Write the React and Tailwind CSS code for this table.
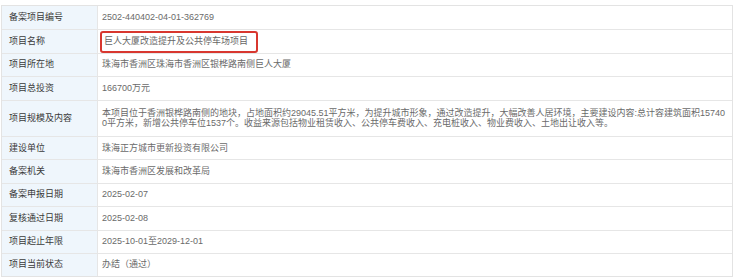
import React from 'react';

const rows = [
  { label: '备案项目编号', value: '2502-440402-04-01-362769' },
  { label: '项目名称', value: '巨人大厦改造提升及公共停车场项目', marked: true },
  { label: '项目所在地', value: '珠海市香洲区珠海市香洲区银桦路南侧巨人大厦' },
  { label: '项目总投资', value: '166700万元' },
  {
    label: '项目规模及内容',
    value:
      '本项目位于香洲银桦路南侧的地块，占地面积约29045.51平方米，为提升城市形象，通过改造提升，大幅改善人居环境，主要建设内容:总计容建筑面积157400平方米，新增公共停车位1537个。收益来源包括物业租赁收入、公共停车费收入、充电桩收入、物业费收入、土地出让收入等。',
    tall: true,
  },
  { label: '建设单位', value: '珠海正方城市更新投资有限公司' },
  { label: '备案机关', value: '珠海市香洲区发展和改革局' },
  { label: '备案申报日期', value: '2025-02-07' },
  { label: '复核通过日期', value: '2025-02-08' },
  { label: '项目起止年限', value: '2025-10-01至2029-12-01' },
  { label: '项目当前状态', value: '办结（通过）' },
];

const App = () => {
  return (
    <div
      className="w-[740px] h-[280px] bg-white pt-[5px] pl-px overflow-hidden"
      style={{ fontFamily: '"Liberation Sans", "Noto Sans CJK SC", sans-serif' }}
    >
      <div className="w-[732px] border border-[#e3e3e3] text-[9px]">
        {rows.map((row, i) => (
          <div
            key={row.label}
            className={`flex ${i > 0 ? 'border-t border-[#e6e6e6]' : ''} ${row.tall ? 'min-h-[36.5px]' : 'h-[23.4px]'}`}
          >
            <div className="w-[96px] shrink-0 bg-[#eff6fc] border-r border-[#e6e6e6] pl-[7px] flex items-center text-[#3a3a3a]">
              {row.label}
            </div>
            {row.marked ? (
              <div className="flex-1 flex items-center pl-[2px]">
                <span className="h-[22px] flex items-center border-2 border-[#d8372f] rounded-[3px] pl-[2px] pr-[8px] text-[#666]">
                  {row.value}
                </span>
              </div>
            ) : (
              <div
                className={`flex-1 flex items-center pl-[4px] text-[#6a6a6a] ${
                  row.tall ? 'pr-[4px] py-[7px] leading-[10.5px] break-all' : ''
                }`}
              >
                {row.value}
              </div>
            )}
          </div>
        ))}
      </div>
    </div>
  );
};

export default App;
